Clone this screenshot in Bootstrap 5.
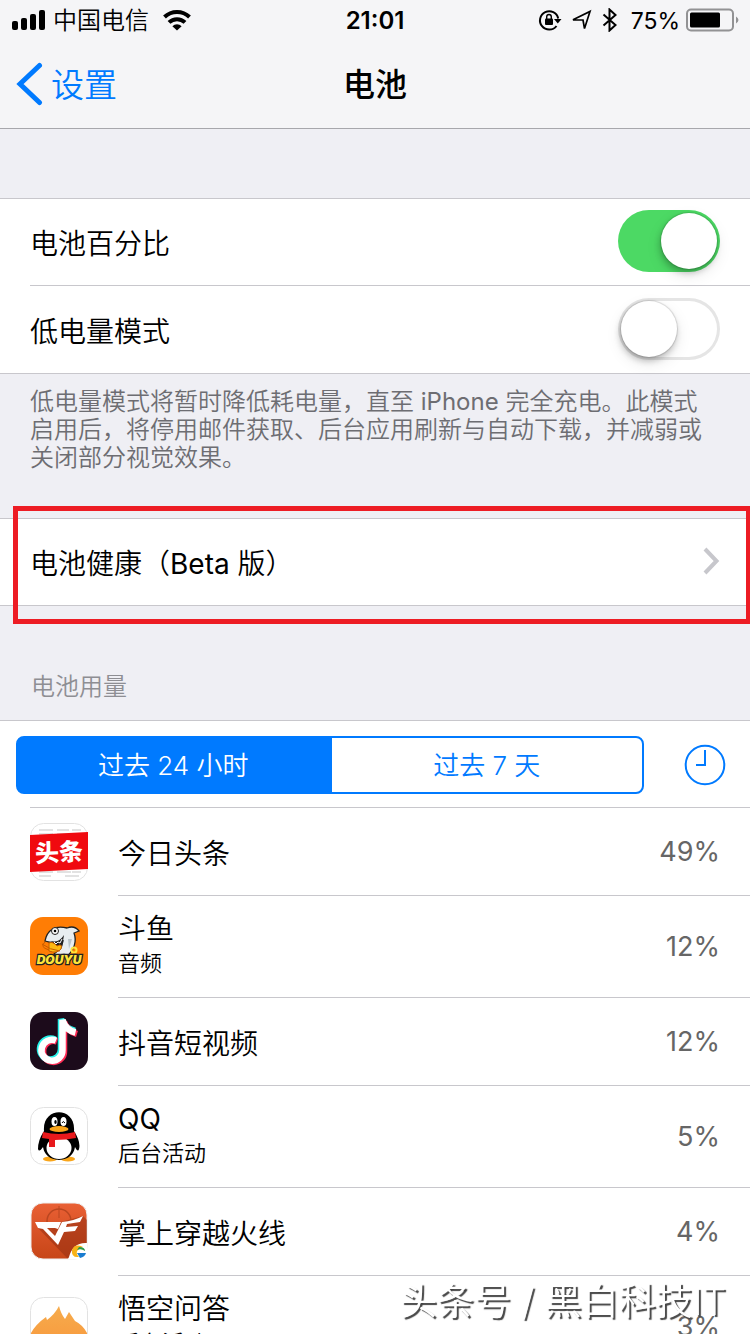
<!DOCTYPE html>
<html lang="zh-CN">
<head>
<meta charset="utf-8">
<meta name="viewport" content="width=device-width, initial-scale=1">
<title>电池</title>
<link rel="stylesheet" href="https://cdn.jsdelivr.net/npm/bootstrap@5.3.0/dist/css/bootstrap.min.css">
<style>
  :root { --ios-blue: #007aff; --hairline: #c8c7cc; }
  body { font-family: Inter, "Noto Sans CJK SC", sans-serif; font-size: 28px; line-height: 36px; color: #000; background: #efeff4; font-weight: 350; }
  .latin { font-weight: 400; }
  .scroller { scrollbar-width: none; }
  .scroller::-webkit-scrollbar { display: none; }
  .topbar { background: #f5f5f7; border-bottom: 1px solid #a7a7ac; }
  .status-row { height: 40px; font-size: 24px; padding: 0 11px; line-height: 40px; }
  .status-row strong, .carrier { padding-top: 2px; }
  .status-pct { font-size: 23px; padding-top: 2px; margin: 0 6px 0 13px; font-weight: 400; }
  .title-row { height: 88px; padding: 0 16px; }
  .title-row h1 { font-size: 32px; font-weight: 500; line-height: 40px; padding-top: 2px; }
  .back-link { font-size: 33px; line-height: 40px; color: var(--ios-blue); gap: 8px; }
  .back-link span { padding-top: 2px; }
  .side { flex: 1 1 0; }
  .group { background: #fff; border-top: 1px solid var(--hairline); border-bottom: 1px solid var(--hairline); }
  .first-group { margin-top: 69px; }
  .setting { margin-left: 30px; padding: 0 30px 2px 0; height: 86px; }
  .setting + .setting { border-top: 1px solid var(--hairline); height: 88px; }
  .setting label { padding-top: 6px; }
  .ios-switch.form-check-input { width: 102px; height: 62px; margin: 0; border: 0; border-radius: 31px; background: #fff; box-shadow: inset 0 0 0 3px #e5e5e5; appearance: none; display: flex; align-items: center; padding: 0 3px; }
  .ios-switch::before { content: ""; width: 56px; height: 56px; border-radius: 50%; background: #fff; box-shadow: 0 0 1px 1px rgba(0,0,0,.12), -1px 4px 6px rgba(0,0,0,.22), 0 6px 16px rgba(0,0,0,.10); }
  .ios-switch.form-check-input:checked { background: #4cd964; box-shadow: none; justify-content: flex-end; }
  .hint { font-size: 24px; line-height: 28px; color: #6d6d72; padding: 14px 30px 0; margin: 0 0 46px; }
  .health { height: 88px; }
  .health-link { height: 86px; padding: 0 30px 2px; color: #000; }
  .health-text { padding-top: 6px; }
  .marker { position: absolute; inset: -13px 0 -19px 13px; border: 5px solid #ed1c24; border-right-width: 4px; pointer-events: none; }
  .usage-title { font-size: 24px; line-height: 32px; color: #8e8e93; margin: 65px 31px 17px; font-weight: 350; }
  .range-row { padding: 15px 24px 13px 16px; gap: 40px; }
  .range-row .btn-group { height: 58px; }
  .range-row .btn { --bs-btn-color: var(--ios-blue); --bs-btn-border-color: var(--ios-blue); --bs-btn-hover-color: var(--ios-blue); --bs-btn-hover-bg: #fff; --bs-btn-hover-border-color: var(--ios-blue); --bs-btn-active-bg: var(--ios-blue); --bs-btn-active-border-color: var(--ios-blue); --bs-btn-active-color: #fff; --bs-btn-border-radius: 8px; --bs-btn-font-size: 26px; --bs-btn-font-weight: 350; --bs-btn-line-height: 54px; --bs-btn-padding-y: 0; --bs-btn-border-width: 2px; width: 50%; padding-top: 1px; line-height: 53px; }
  .app { margin-left: 30px; gap: 30px; }
  .app-icon { width: 58px; height: 58px; flex: none; }
  .app-body { border-top: 1px solid var(--hairline); height: 88px; padding-right: 30px; }
  .app-body.tall { height: 102px; }
  .app-name { padding-top: 4px; }
  .tall .app-name { padding: 0 0 2px; line-height: 34px; }
  .app:first-child { border-top: 1px solid var(--hairline); }
  .app:first-child .app-body { border-top: 0; height: 87px; }
  .app-note { font-size: 22px; line-height: 34px; }
  .percent { color: #666; font-size: 27px; font-weight: 400; }
  .stamp { position: fixed; right: 24px; bottom: 8px; font-size: 37px; line-height: 48px; font-weight: 350; color: #fff; text-shadow: 2px 2px 1px #444; pointer-events: none; }
  .logo-text { font-family: Inter, "Noto Sans CJK SC", sans-serif; font-weight: 900; }
</style>
</head>
<body class="vh-100 d-flex flex-column overflow-hidden">
<header class="topbar flex-shrink-0">
  <div class="status-row d-flex align-items-center">
    <div class="side d-flex align-items-center">
      <svg width="34" height="22" viewBox="0 0 34 22" aria-hidden="true"><rect x="1" y="12" width="6" height="9" rx="2"/><rect x="10" y="9" width="6" height="12" rx="2"/><rect x="19" y="5" width="6" height="16" rx="2"/><rect x="28" y="1" width="6" height="20" rx="2"/></svg>
      <span class="carrier ms-2">中国电信</span>
      <svg style="margin-left:14px" width="28" height="22" viewBox="0 0 28 22" aria-hidden="true"><g fill="none" stroke="#000" stroke-width="4"><path d="M1.500 8a18 18 0 0 1 25 0"/><path d="M6 13.400a11.500 11.500 0 0 1 16 0"/></g><path d="M14 21.500l-4.600-4.300a6.500 6.500 0 0 1 9.200 0z"/></svg>
    </div>
    <strong class="fw-semibold">21:01</strong>
    <div class="side d-flex align-items-center justify-content-end">
      <svg width="24" height="24" viewBox="0 0 24 24" aria-hidden="true"><path d="M18.500 18A9.200 9.200 0 1 1 20.200 10.500" fill="none" stroke="#000" stroke-width="2"/><path d="M16 11h7.500l-3.700 4.500z"/><rect x="7" y="10.500" width="8" height="6.500" rx="1"/><path d="M8.700 11V8.800a2.300 2.300 0 0 1 4.600 0V11" fill="none" stroke="#000" stroke-width="1.400"/></svg>
      <svg class="ms-2" width="24" height="24" viewBox="0 0 24 24" aria-hidden="true"><path d="M3 11.800L20 3.500 14.500 20.500 13 12z" fill="none" stroke="#000" stroke-width="1.700"/></svg>
      <svg class="ms-2" width="16" height="24" viewBox="0 0 16 24" aria-hidden="true"><path d="M1.500 6.500l12 10.500-6 5.500V1.500l6 5.500-12 10.500" fill="none" stroke="#000" stroke-width="2"/></svg>
      <span class="status-pct">75%</span>
      <svg width="53" height="24" viewBox="0 0 53 24" aria-hidden="true"><rect x="1" y="1.500" width="46" height="21" rx="4" fill="none" stroke="#929294" stroke-width="2"/><rect x="4" y="4.500" width="30" height="15" rx="1.500"/><path d="M50 8.500q5 3.500 0 7z" fill="#929294"/></svg>
    </div>
  </div>
  <nav class="title-row d-flex align-items-center">
    <div class="side d-flex"><a href="#" class="back-link d-flex align-items-center text-decoration-none">
      <svg width="27" height="44" viewBox="0 0 27 44" aria-hidden="true"><path d="M23.500 3.500L4 22l19.500 18.500" fill="none" stroke="#007aff" stroke-width="5" stroke-linecap="round"/></svg><span>设置</span></a></div>
    <h1 class="m-0">电池</h1>
    <div class="side"></div>
  </nav>
</header>

<main class="scroller flex-grow-1 overflow-auto">
  <section class="group first-group">
    <div class="setting d-flex align-items-center justify-content-between">
      <label for="pct">电池百分比</label>
      <input class="ios-switch form-check-input" type="checkbox" role="switch" id="pct" checked>
    </div>
    <div class="setting d-flex align-items-center justify-content-between">
      <label for="low">低电量模式</label>
      <input class="ios-switch form-check-input" type="checkbox" role="switch" id="low">
    </div>
  </section>
  <p class="hint">低电量模式将暂时降低耗电量，直至 <span class="latin">iPhone</span> 完全充电。此模式启用后，将停用邮件获取、后台应用刷新与自动下载，并减弱或关闭部分视觉效果。</p>

  <section class="group health position-relative">
    <a href="#" class="health-link d-flex align-items-center justify-content-between text-decoration-none">
      <span class="health-text">电池健康（<span class="latin">Beta</span> 版）</span>
      <svg width="18" height="28" viewBox="0 0 18 28" aria-hidden="true"><path d="M3 2l11.500 12L3 26" fill="none" stroke="#c7c7cc" stroke-width="4"/></svg>
    </a>
    <div class="marker"></div>
  </section>

  <h2 class="usage-title">电池用量</h2>
  <section class="group">
    <div class="range-row d-flex align-items-center">
      <div class="btn-group flex-grow-1" role="group" aria-label="时间范围">
        <button type="button" class="btn active">过去 24 小时</button>
        <button type="button" class="btn">过去 7 天</button>
      </div>
      <button type="button" class="border-0 bg-transparent p-0 d-flex" aria-label="显示使用时间">
        <svg width="42" height="42" viewBox="0 0 42 42" fill="none" stroke="#007aff" stroke-width="2"><circle cx="21" cy="21" r="19.300"/><path d="M21 6v15h-9"/></svg>
      </button>
    </div>
    <ul class="list-unstyled m-0">
      <li class="app d-flex align-items-center">
        <svg class="app-icon" viewBox="0 0 58 58" aria-hidden="true"><rect x=".5" y=".5" width="57" height="57" rx="13" fill="#fff" stroke="#e2e2e2"/><path d="M9 7h14M27 7h12M42 7h9M9 11h14M27 11h12M9 49h14M27 49h14M9 53h12M35 53h14M42 49h9" stroke="#e2e2e2" stroke-width="2"/><path d="M0 12L58 9V46L0 49z" fill="#f00a0f"/><text class="logo-text" x="29" y="38" font-size="24" text-anchor="middle" fill="#fff" transform="rotate(-3 29 29)">头条</text></svg>
        <div class="app-body d-flex flex-grow-1 align-items-center justify-content-between"><div class="app-name">今日头条</div><span class="percent">49%</span></div>
      </li>
      <li class="app d-flex align-items-center">
        <svg class="app-icon" viewBox="0 0 58 58" aria-hidden="true"><rect width="58" height="58" rx="13" fill="#ff7d05"/><path d="M15 24C17 13 25 8 37 11C42 9 46 10 49 14L44 16C47 24 44 33 38 38L29 42L24 37L31 31L33 24Q24 27 15 24z" fill="#e8edf0" stroke="#222" stroke-width="1.300"/><path d="M21 24q7 3 13-6l-2 12q-6 0-11-6z" fill="#222"/><path d="M24 25l2 2 2-2 2 1 2-4" fill="none" stroke="#fff"/><circle cx="25" cy="14" r="3.500" fill="#fff" stroke="#222"/><circle cx="25" cy="14" r="1.300"/><path d="M19 26q4-2 8 3 6-3 4 3-4 5-12 2z" fill="#fdb913" stroke="#c65c00"/><path d="M12 27q8 6 18 7M15 25q-6 5 4 8" fill="none" stroke="#c65c00"/><path d="M38 22l1 10 3-10" fill="#b9c4c9"/><circle cx="44" cy="33" r="2.500" fill="none" stroke="#ffe43a" stroke-width="2"/><text class="logo-text" x="29" y="47" font-size="12" text-anchor="middle" font-style="italic" fill="#ffe43a" stroke="#222" stroke-width="2.500" paint-order="stroke">DOUYU</text></svg>
        <div class="app-body tall d-flex flex-grow-1 align-items-center justify-content-between"><div class="app-name">斗鱼<div class="app-note">音频</div></div><span class="percent">12%</span></div>
      </li>
      <li class="app d-flex align-items-center">
        <svg class="app-icon" viewBox="0 0 58 58" aria-hidden="true"><rect width="58" height="58" rx="13" fill="#1c0b1b"/><g fill="none" stroke-width="6.500"><path d="M25 27.500A10.500 10.500 0 1 0 31 37V7q3 9 14 12" stroke="#25f0e8"/><path d="M27 29.500A10.500 10.500 0 1 0 34 39V10q3 9 13 12" stroke="#fe2c55"/><path d="M26 28.500A10.500 10.500 0 1 0 32.500 38V8q3 10 13 12.500" stroke="#fff"/></g></svg>
        <div class="app-body d-flex flex-grow-1 align-items-center justify-content-between"><div class="app-name">抖音短视频</div><span class="percent">12%</span></div>
      </li>
      <li class="app d-flex align-items-center">
        <svg class="app-icon" viewBox="0 0 58 58" aria-hidden="true"><rect x=".5" y=".5" width="57" height="57" rx="13" fill="#fff" stroke="#e2e2e2"/><ellipse cx="20" cy="52" rx="7" ry="2.500" fill="#f9a51a"/><ellipse cx="38" cy="52" rx="7" ry="2.500" fill="#f9a51a"/><path d="M14 24C12 -1 46 -1 44 24Q51 35 49 42Q48 46 45 40Q43 52 29 53Q15 52 13 40Q9 46 8 42Q8 33 14 24z"/><ellipse cx="29" cy="41" rx="12.500" ry="11" fill="#fff"/><ellipse cx="24.500" cy="14.500" rx="3" ry="4.500" fill="#fff"/><ellipse cx="33.500" cy="14.500" rx="3" ry="4.500" fill="#fff"/><ellipse cx="25.500" cy="15" rx="1.200" ry="2"/><path d="M32 16q1-3 3 0" fill="none" stroke="#000"/><ellipse cx="29" cy="22" rx="9.500" ry="3" fill="#f9a51a"/><path d="M13 25q16 4 32 0l1 6q-10 2-21 2v7h-6v-8l-7-1z" fill="#e8191c"/></svg>
        <div class="app-body tall d-flex flex-grow-1 align-items-center justify-content-between"><div class="app-name"><span class="latin">QQ</span><div class="app-note">后台活动</div></div><span class="percent">5%</span></div>
      </li>
      <li class="app d-flex align-items-center">
        <svg class="app-icon" viewBox="0 0 58 58" aria-hidden="true"><defs><linearGradient id="cf" x2="0" y2="1"><stop stop-color="#e96035"/><stop offset="1" stop-color="#c74517"/></linearGradient></defs><rect x="1" y="1" width="56" height="56" rx="12" fill="url(#cf)" stroke="#eee"/><path d="M8 26L37 56H44L57 44V18L53 14z" fill="#8f2b10" opacity=".5"/><circle cx="29" cy="19" r="12" fill="none" stroke="#b94620" stroke-width="1.500"/><path d="M29 4v12" stroke="#b94620"/><path d="M5 20H31L28 27 25 26H17L25 34 32 20Q44 19 53 14L50 20 37 22 36 25 48 24 45 29 34 30 28 43 13 27 8 26z" fill="#fff"/><path d="M57 41q-14-1-18 14l-1 2h12q7-1 7-7z" fill="#fff"/><path d="M53 45Q45 41 42 48Q41 56 49 55Q43 49 53 45z" fill="#f7b217"/><path d="M49 45q6 0 6 4-4-3-8-1z" fill="#2b9c49"/><path d="M47 51h9q-1 4-6 5z" fill="#1a7cd0"/></svg>
        <div class="app-body d-flex flex-grow-1 align-items-center justify-content-between"><div class="app-name">掌上穿越火线</div><span class="percent">4%</span></div>
      </li>
      <li class="app d-flex align-items-center">
        <svg class="app-icon" viewBox="0 0 58 58" aria-hidden="true"><defs><linearGradient id="fire" x2="0" y2="1"><stop stop-color="#f6ac4d"/><stop offset="1" stop-color="#f8953a"/></linearGradient></defs><rect x=".5" y=".5" width="57" height="57" rx="13" fill="#fff" stroke="#e2e2e2"/><path d="M1 36Q6 27 16 20L17 23Q25 17 29 9Q31 17 35 22L39 15 45 24Q53 28 57 36V45Q56 57 45 57H13Q1 57 1 45z" fill="url(#fire)"/></svg>
        <div class="app-body tall d-flex flex-grow-1 align-items-center justify-content-between"><div class="app-name">悟空问答<div class="app-note">后台活动</div></div><span class="percent">3%</span></div>
      </li>
    </ul>
  </section>
</main>
<div class="stamp">头条号 / 黑白科技IT</div>
<script src="https://cdn.jsdelivr.net/npm/bootstrap@5.3.0/dist/js/bootstrap.bundle.min.js"></script>
</body>
</html>
